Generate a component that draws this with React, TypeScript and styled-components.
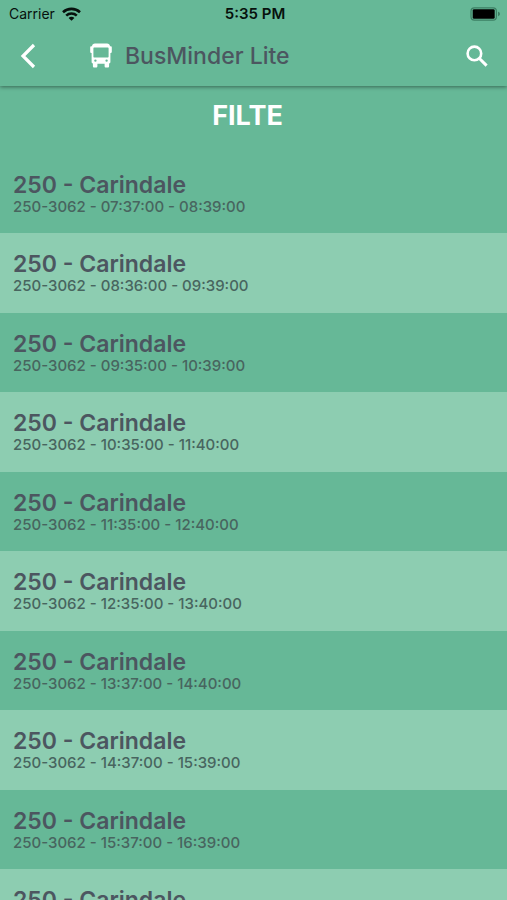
import React from "react";
import styled, { createGlobalStyle } from "styled-components";

const GlobalStyle = createGlobalStyle`
  * { box-sizing: border-box; }
  body {
    margin: 0;
    background: #66b897;
    font-family: Inter, "Liberation Sans", sans-serif;
    color: #4c5660;
  }
  h1, h2, p { margin: 0; }
`;

const Screen = styled.div`
  display: flex;
  flex-direction: column;
  height: 100vh;
  overflow: hidden;
`;

const TopBar = styled.header`
  z-index: 1;
  flex: none;
  background: #66b897;
  box-shadow: 0 1px 4px rgba(0, 0, 0, 0.45);
`;

const StatusBar = styled.div`
  display: grid;
  grid-template-columns: 1fr auto 1fr;
  align-items: center;
  height: 27px;
  padding: 0 6px 0 9px;
  color: #07110d;
  font-size: 14px;
  line-height: 18px;
`;

const Carrier = styled.div`
  display: flex;
  align-items: center;
  gap: 7px;
`;

const Clock = styled.time`
  font-size: 15px;
  font-weight: 600;
`;

const BatteryIcon = styled.svg`
  justify-self: end;
`;

const NavBar = styled.div`
  display: flex;
  align-items: center;
  height: 59px;
  padding: 0 14px 2px 12px;
`;

const IconButton = styled.button`
  display: flex;
  align-items: center;
  justify-content: center;
  width: 32px;
  height: 40px;
  padding: 0;
  border: 0;
  background: none;
  color: #fff;
  cursor: pointer;
`;

const Brand = styled.div`
  display: flex;
  flex: 1;
  align-items: center;
  gap: 13px;
  padding-left: 46px;
  color: #fff;
`;

const Title = styled.h1`
  color: #4c5660;
  font-size: 23px;
  font-weight: 500;
  line-height: 28px;
`;

const FilterButton = styled.button`
  flex: none;
  align-self: center;
  height: 68px;
  margin-right: 12px;
  padding: 0 8px 8px;
  border: 0;
  background: none;
  color: #fff;
  font: 700 27px/32px Inter, "Liberation Sans", sans-serif;
  cursor: pointer;
`;

const TripList = styled.ul`
  flex: 1;
  min-height: 0;
  margin: 0;
  padding: 0;
  overflow-y: auto;
  list-style: none;
  scrollbar-width: none;
`;

const TripRow = styled.li<{ $light: boolean }>`
  height: ${({ $light }) => ($light ? 80 : 79)}px;
  padding: 18px 13px 0;
  background: ${({ $light }) => ($light ? "#8dcdb1" : "#66b897")};
`;

const TripName = styled.h2`
  font-size: 23px;
  font-weight: 600;
  line-height: 27px;
`;

const TripTimes = styled.p`
  font-size: 15px;
  font-weight: 500;
  line-height: 15px;
  color: #48655f;
`;

const trips = [
  ["07:37:00", "08:39:00"],
  ["08:36:00", "09:39:00"],
  ["09:35:00", "10:39:00"],
  ["10:35:00", "11:40:00"],
  ["11:35:00", "12:40:00"],
  ["12:35:00", "13:40:00"],
  ["13:37:00", "14:40:00"],
  ["14:37:00", "15:39:00"],
  ["15:37:00", "16:39:00"],
  ["16:37:00", "17:39:00"],
];

export default function App() {
  return (
    <>
      <GlobalStyle />
      <Screen>
        <TopBar>
          <StatusBar>
            <Carrier>
              Carrier
              <svg width="19" height="14" viewBox="0 0 19 14" fill="none" stroke="currentColor" strokeWidth="2.6" aria-hidden="true">
                <path d="M1 5.2C5.7 0.8 13.3 0.8 18 5.2" />
                <path d="M4.2 8.6C7.2 5.8 11.8 5.8 14.8 8.6" />
                <path d="M9.5 13.8L6.6 10.9C8.2 9.4 10.8 9.4 12.4 10.9Z" fill="currentColor" stroke="none" />
              </svg>
            </Carrier>
            <Clock>5:35 PM</Clock>
            <BatteryIcon width="31" height="14" viewBox="0 0 31 14" aria-hidden="true">
              <rect x="1" y="0.8" width="25.4" height="12.4" rx="3.4" fill="none" stroke="#3d7f64" strokeWidth="1.2" />
              <rect x="2.7" y="2.2" width="22" height="9.6" rx="1.4" fill="#000" />
              <path d="M28 4.8C30.6 5.3 30.6 8.7 28 9.2Z" fill="#3d7f64" />
            </BatteryIcon>
          </StatusBar>
          <NavBar>
            <IconButton type="button" aria-label="Back">
              <svg width="16" height="26" viewBox="0 0 16 26" fill="none" stroke="currentColor" strokeWidth="3.2">
                <path d="M14 2L3 13L14 24" />
              </svg>
            </IconButton>
            <Brand>
              <svg width="22" height="25" viewBox="0 0 22 25" fill="currentColor" aria-hidden="true">
                <path
                  fillRule="evenodd"
                  d="M5 0.4H17C18.8 0.4 19.8 1.4 20 3.2H20.6C21.4 3.2 21.8 3.7 21.8 4.4V8.8C21.8 9.6 21.3 10 20.4 10V18.8C20.4 19.8 19.9 20.4 19.1 20.6V23C19.1 24 18.6 24.6 17.7 24.6H16C15.1 24.6 14.6 24 14.6 23V20.7H7.4V23C7.4 24 6.9 24.6 6 24.6H4.3C3.4 24.6 2.9 24 2.9 23V20.6C2.1 20.4 1.6 19.8 1.6 18.8V10C0.7 10 0.2 9.6 0.2 8.8V4.4C0.2 3.7 0.6 3.2 1.4 3.2H2C2.2 1.4 3.2 0.4 5 0.4ZM4.4 4.4C3.8 4.4 3.4 4.8 3.4 5.4V13.4C3.4 14 3.8 14.4 4.4 14.4H17.6C18.2 14.4 18.6 14 18.6 13.4V5.4C18.6 4.8 18.2 4.4 17.6 4.4ZM5.4 16.4A1.2 1.2 0 1 0 5.4 18.8A1.2 1.2 0 1 0 5.4 16.4ZM16.6 16.4A1.2 1.2 0 1 0 16.6 18.8A1.2 1.2 0 1 0 16.6 16.4Z"
                />
              </svg>
              <Title>BusMinder Lite</Title>
            </Brand>
            <IconButton type="button" aria-label="Search">
              <svg width="22" height="22" viewBox="0 0 22 22" fill="none" stroke="currentColor" strokeWidth="2.6">
                <circle cx="8.4" cy="8.4" r="6.8" />
                <path d="M13.2 13.2L20.6 20.6" strokeWidth="3" />
              </svg>
            </IconButton>
          </NavBar>
        </TopBar>
        <FilterButton type="button">FILTE</FilterButton>
        <TripList>
          {trips.map(([start, end], index) => (
            <TripRow key={start} $light={index % 2 === 1}>
              <TripName>250 - Carindale</TripName>
              <TripTimes>{`250-3062 - ${start} - ${end}`}</TripTimes>
            </TripRow>
          ))}
        </TripList>
      </Screen>
    </>
  );
}
